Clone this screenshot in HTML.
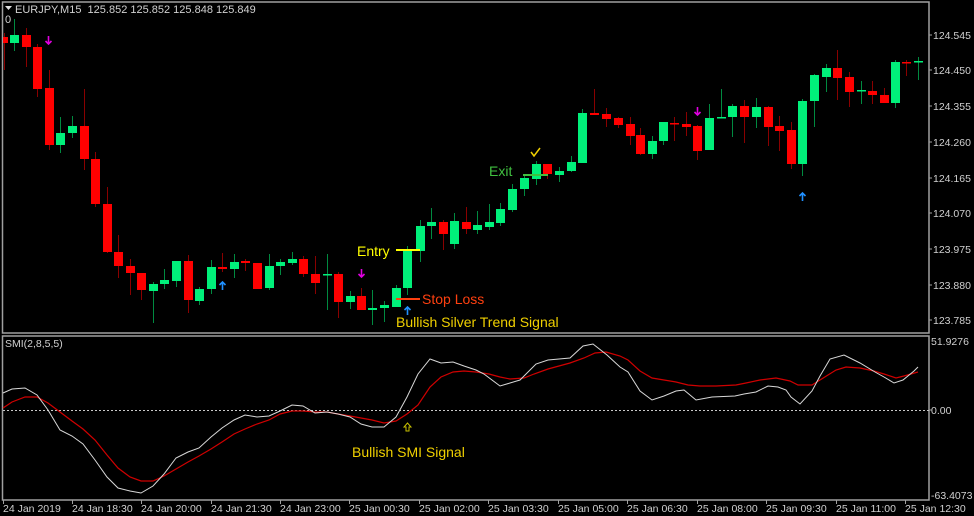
<!DOCTYPE html>
<html><head><meta charset="utf-8"><style>
html,body{margin:0;padding:0;background:#000;width:974px;height:516px;overflow:hidden}
svg{display:block}
text{font-family:"Liberation Sans",sans-serif}
</style></head><body>
<svg id="s" width="974" height="516" viewBox="0 0 974 516" xmlns="http://www.w3.org/2000/svg">
<rect width="974" height="516" fill="#000"/>
<g stroke="#a0a0a0" stroke-width="1.5" fill="none">
<rect x="2.5" y="2" width="926.5" height="331"/>
<rect x="2.5" y="336" width="926.5" height="164"/>
</g>
<g id="candles"></g>
<line x1="3" y1="410.5" x2="929" y2="410.5" stroke="#c8c8c8" stroke-dasharray="2,2" stroke-width="1"/>
<polyline id="red" fill="none" stroke="#d00000" stroke-width="1.2"/>
<polyline id="white" fill="none" stroke="#d8d8d8" stroke-width="1"/>
<g fill="#d0d0d0" font-size="11">
<polygon points="5,6 12,6 8.5,10" fill="#e0e0e0"/>
<text x="15" y="13">EURJPY,M15&#160; 125.852 125.852 125.848 125.849</text>
<text x="5" y="23">0</text>
<text x="5" y="347" font-size="10.5">SMI(2,8,5,5)</text>
</g>
<g fill="#d0d0d0" font-size="10.5">
<text x="933" y="39">124.545</text>
<text x="933" y="74">124.450</text>
<text x="933" y="110">124.355</text>
<text x="933" y="146">124.260</text>
<text x="933" y="182">124.165</text>
<text x="933" y="217">124.070</text>
<text x="933" y="253">123.975</text>
<text x="933" y="289">123.880</text>
<text x="933" y="324">123.785</text>
<text x="931" y="345">51.9276</text>
<text x="931" y="414">0.00</text>
<text x="931" y="499">-63.4073</text>
</g>
<g stroke="#a0a0a0" stroke-width="1">
<line x1="929" y1="35" x2="932" y2="35"/><line x1="929" y1="70" x2="932" y2="70"/><line x1="929" y1="106" x2="932" y2="106"/><line x1="929" y1="142" x2="932" y2="142"/><line x1="929" y1="178" x2="932" y2="178"/><line x1="929" y1="213" x2="932" y2="213"/><line x1="929" y1="249" x2="932" y2="249"/><line x1="929" y1="285" x2="932" y2="285"/><line x1="929" y1="320" x2="932" y2="320"/><line x1="929" y1="410" x2="932" y2="410"/>
</g>
<g fill="#d0d0d0" font-size="10.5">
<text x="3" y="512">24 Jan 2019</text>
<text x="72" y="512">24 Jan 18:30</text>
<text x="141" y="512">24 Jan 20:00</text>
<text x="211" y="512">24 Jan 21:30</text>
<text x="280" y="512">24 Jan 23:00</text>
<text x="349" y="512">25 Jan 00:30</text>
<text x="419" y="512">25 Jan 02:00</text>
<text x="488" y="512">25 Jan 03:30</text>
<text x="558" y="512">25 Jan 05:00</text>
<text x="627" y="512">25 Jan 06:30</text>
<text x="697" y="512">25 Jan 08:00</text>
<text x="766" y="512">25 Jan 09:30</text>
<text x="836" y="512">25 Jan 11:00</text>
<text x="905" y="512">25 Jan 12:30</text>
</g>
<g id="ticks" stroke="#a0a0a0"></g>
<line x1="396" y1="250" x2="420" y2="250" stroke="#ffff00" stroke-width="2"/>
<line x1="523" y1="175" x2="548" y2="175" stroke="#40c040" stroke-width="2"/>
<line x1="396" y1="299" x2="420" y2="299" stroke="#ff4010" stroke-width="2"/>
<g font-size="14">
<text x="357" y="256" fill="#ffff00">Entry</text>
<text x="489" y="176" fill="#40c040">Exit</text>
<text x="422" y="304" fill="#ff4010">Stop Loss</text>
<text x="396" y="327" fill="#f0d000">Bullish Silver Trend Signal</text>
<text x="352" y="457" fill="#f0d000">Bullish SMI Signal</text>
</g>
<path d="M531 152 L534 156 L540 148" stroke="#f0d000" stroke-width="1.5" fill="none"/>
<path d="M407.5 423 L404 427 H406 V431 H409 V427 H411 Z" stroke="#c8c000" stroke-width="1" fill="none"/>
<g id="arrows"></g>
</svg>
<script>
var C=[[4,'r',37,43,33,70],[14,'g',35,43,19,51],[26,'r',35,47,28,67],[37,'r',47,89,44,97],[49,'r',88,145,70,150],[60,'g',133,145,117,153],[72,'g',126,133,116,138],[84,'r',126,159,89,170],[95,'r',159,204,152,207],[107,'r',204,252,187,253],[118,'r',252,266,235,278],[130,'r',266,273,259,295],[141,'r',273,290,273,300],[153,'g',284,291,282,323],[164,'g',280,284,269,289],[176,'g',261,281,261,287],[188,'r',261,300,255,313],[199,'g',289,301,287,305],[211,'g',267,289,260,294],[222,'r',267,269,253,272],[234,'g',262,269,254,278],[245,'r',261,263,259,271],[257,'r',263,289,263,289],[269,'g',266,288,254,290],[280,'g',262,266,259,275],[292,'g',259,263,252,265],[303,'r',259,274,256,277],[315,'r',274,283,256,294],[327,'g',274,275,254,310],[338,'r',274,302,272,318],[350,'g',296,302,291,309],[361,'r',296,310,288,310],[372,'g',308,310,290,325],[384,'g',305,308,301,322],[396,'g',288,307,285,307],[407,'g',251,288,246,295],[420,'g',226,251,220,262],[431,'g',222,226,208,239],[443,'r',222,234,220,250],[454,'g',221,244,213,249],[466,'r',222,229,207,234],[477,'g',225,230,211,234],[489,'g',222,227,204,230],[500,'g',209,223,203,226],[512,'g',189,210,184,212],[524,'g',178,189,174,196],[536,'g',164,179,161,185],[547,'r',164,174,164,179],[559,'g',171,175,167,182],[571,'g',162,171,156,172],[582,'g',113,163,109,163],[594,'r',113,115,89,115],[606,'r',114,119,108,127],[618,'r',118,125,117,128],[630,'r',124,136,117,145],[640,'r',135,154,128,155],[652,'g',141,154,136,159],[663,'g',122,141,122,145],[674,'r',123,124,117,141],[686,'r',124,127,112,136],[697,'r',126,151,125,160],[709,'g',118,150,104,150],[721,'g',117,118,89,118],[732,'g',106,117,104,137],[744,'r',106,117,100,143],[756,'g',107,117,98,128],[768,'r',107,127,106,146],[779,'r',126,131,116,151],[791,'r',130,164,122,169],[802,'g',101,164,99,176],[814,'g',75,101,74,127],[826,'g',68,77,64,92],[837,'r',68,78,50,100],[849,'r',77,92,72,107],[861,'g',90,91,81,104],[872,'r',91,95,81,104],[884,'r',95,103,88,103],[895,'g',62,103,60,108],[906,'r',62,63,60,76],[918,'g',61,62,57,80]];
var h='';C.forEach(function(c){var x=c[0],g=c[1]=='g';var wc=g?'#008a40':'#8a0000',bc=g?'#00f07a':'#ff0000';var w0=x-4;if(x<8)w0=3;
h+='<line x1="'+(x+0.5)+'" y1="'+c[4]+'" x2="'+(x+0.5)+'" y2="'+c[5]+'" stroke="'+wc+'" stroke-width="1"/>';
var hh=Math.max(c[3]-c[2],1.5);h+='<rect x="'+w0+'" y="'+c[2]+'" width="'+(x<8?5:9)+'" height="'+hh+'" fill="'+bc+'"/>';});
document.getElementById('candles').innerHTML=h;
var W=[[3,393],[12,389],[25,388],[37,395],[48,410],[60,430],[72,436],[83,444],[95,460],[107,477],[118,488],[130,491],[141,493],[153,486],[164,474],[176,458],[188,452],[199,448],[211,437],[222,428],[234,420],[245,415],[257,417],[269,416],[280,411],[292,405],[303,406],[315,413],[327,412],[338,414],[350,417],[361,424],[372,427],[384,427],[396,417],[407,397],[418,374],[430,359],[441,363],[453,362],[464,366],[476,370],[484,374],[500,386],[510,383],[520,380],[536,364],[548,360],[570,358],[583,346],[593,344],[607,355],[620,367],[628,372],[640,391],[652,400],[664,396],[676,391],[684,390],[696,400],[712,397],[735,396],[744,394],[756,392],[768,386],[778,387],[786,390],[791,397],[800,404],[812,391],[820,376],[830,359],[844,355],[860,363],[875,372],[884,377],[894,383],[903,380],[914,371],[918,367]];
var R=[[3,408],[12,402],[25,397],[37,397],[48,403],[60,412],[72,421],[83,429],[95,440],[107,455],[118,468],[130,477],[141,481],[153,481],[164,476],[176,469],[188,462],[199,456],[211,449],[222,442],[234,434],[245,429],[257,424],[269,420],[280,414],[292,411],[303,411],[315,412],[327,412],[338,414],[350,416],[361,418],[372,420],[384,423],[396,421],[407,414],[418,405],[430,387],[441,377],[453,372],[464,371],[476,372],[489,374],[500,377],[510,379],[524,378],[534,374],[548,369],[570,363],[584,358],[595,353],[606,352],[620,356],[628,360],[640,371],[652,378],[664,380],[676,382],[688,385],[700,386],[716,386],[736,385],[746,383],[760,380],[776,378],[790,381],[798,385],[812,385],[820,380],[836,370],[846,367],[860,368],[874,371],[884,374],[896,378],[904,376],[918,372]];
function p(a){return a.map(function(q){return q[0]+','+q[1]}).join(' ')}
document.getElementById('white').setAttribute('points',p(W));
document.getElementById('red').setAttribute('points',p(R));
var t='';[3,72,141,211,280,349,419,488,558,627,697,766,836,905].forEach(function(x){t+='<line x1="'+(x+0.5)+'" y1="500" x2="'+(x+0.5)+'" y2="504"/>'});
document.getElementById('ticks').innerHTML=t;
var a='';
[[48,40],[361,273],[697,111]].forEach(function(q){a+='<path d="M'+(q[0]+0.5)+' '+(q[1]-4)+' V'+(q[1]+4)+' M'+(q[0]-2.5)+' '+(q[1]+1)+' L'+(q[0]+0.5)+' '+(q[1]+4)+' L'+(q[0]+3.5)+' '+(q[1]+1)+'" stroke="#e000e0" stroke-width="1.6" fill="none"/>'});
[[222,286],[407,311],[802,197]].forEach(function(q){a+='<path d="M'+(q[0]+0.5)+' '+(q[1]+4)+' V'+(q[1]-4)+' M'+(q[0]-2.5)+' '+(q[1]-1)+' L'+(q[0]+0.5)+' '+(q[1]-4)+' L'+(q[0]+3.5)+' '+(q[1]-1)+'" stroke="#2090ff" stroke-width="1.6" fill="none"/>'});
document.getElementById('arrows').innerHTML=a;
</script>
</body></html>
